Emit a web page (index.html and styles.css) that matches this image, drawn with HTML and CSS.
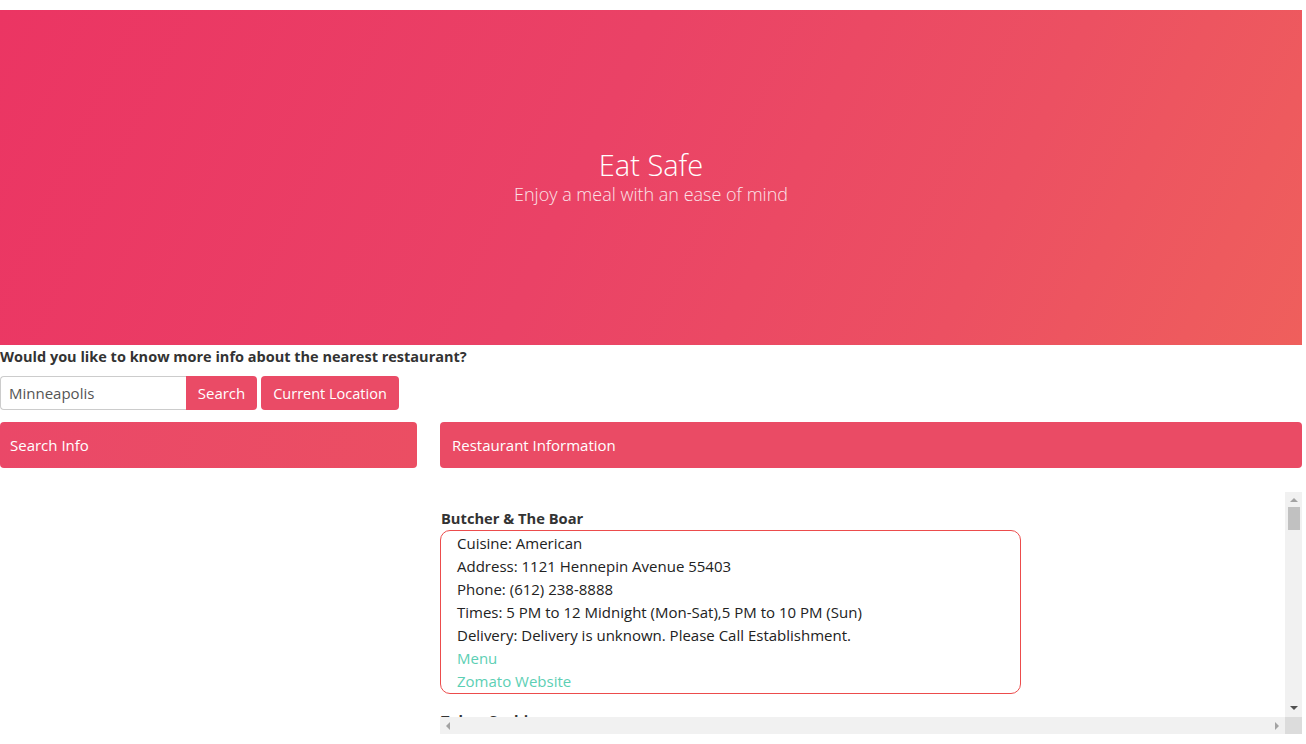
FILE: index.html
```html
<!DOCTYPE html>
<html lang="en">
<head>
<meta charset="utf-8">
<title>Eat Safe</title>
<link rel="stylesheet" href="styles.css">
</head>
<body>
<div class="page">
  <header class="hero">
    <h1 class="hero-title">Eat Safe</h1>
    <p class="hero-sub">Enjoy a meal with an ease of mind</p>
  </header>

  <p class="question">Would you like to know more info about the nearest restaurant?</p>

  <div class="search-row">
    <input class="search-input" type="text" value="Minneapolis">
    <button class="btn btn-search">Search</button>
    <button class="btn btn-location">Current Location</button>
  </div>

  <div class="columns">
    <section class="col-left">
      <div class="panel">Search Info</div>
    </section>
    <section class="col-right">
      <div class="panel">Restaurant Information</div>
      <div class="results">
        <div class="viewport">
          <div class="item">
            <h3 class="item-name">Butcher &amp; The Boar</h3>
            <div class="item-box">
              <p>Cuisine: American</p>
              <p>Address: 1121 Hennepin Avenue 55403</p>
              <p>Phone: (612) 238-8888</p>
              <p>Times: 5 PM to 12 Midnight (Mon-Sat),5 PM to 10 PM (Sun)</p>
              <p>Delivery: Delivery is unknown. Please Call Establishment.</p>
              <p><a href="#">Menu</a></p>
              <p><a href="#">Zomato Website</a></p>
            </div>
          </div>
          <div class="item">
            <h3 class="item-name">Tokyo Sushi</h3>
          </div>
        </div>
        <div class="vbar">
          <span class="arrow arrow-up"></span>
          <div class="vtrack"><span class="vthumb"></span></div>
          <span class="arrow arrow-down"></span>
        </div>
        <div class="hbar">
          <span class="arrow arrow-left"></span>
          <span class="arrow arrow-right"></span>
        </div>
        <div class="corner"></div>
      </div>
    </section>
  </div>
</div>
</body>
</html>
```

FILE: styles.css
```css
* { box-sizing: border-box; }

html, body {
  margin: 0;
  padding: 0;
  background: #fff;
  overflow: hidden;
}

body {
  font-family: "Open Sans", "Noto Sans", sans-serif;
  font-size: 14px;
  color: #333;
}

.page {
  width: 1302px;
  padding-top: 10px;
}

.hero {
  height: 335px;
  background: linear-gradient(115deg, #eb3563 0%, #ea4266 45%, #ec5062 75%, #ef5f5c 100%);
  display: flex;
  flex-direction: column;
  align-items: center;
  justify-content: center;
  color: #fff;
  text-align: center;
  padding-bottom: 2px;
}

.hero-title {
  margin: 0;
  font-weight: 300;
  font-size: 29px;
  line-height: 36px;
}

.hero-sub {
  margin: -1px 0 0;
  font-weight: 300;
  font-size: 18px;
  line-height: 24px;
  color: #fbe3e8;
}

.question {
  margin: 1px 0 0;
  font-weight: 700;
  font-size: 14.5px;
  line-height: 22px;
  color: #333;
}

.search-row {
  display: flex;
  margin-top: 8px;
  height: 34px;
}

.search-input {
  width: 186px;
  height: 34px;
  border: 1px solid #ccc;
  border-right: none;
  border-radius: 4px 0 0 4px;
  padding: 0 8px;
  font-family: inherit;
  font-size: 15px;
  color: #555;
  outline: none;
}

.btn {
  height: 34px;
  border: none;
  background: #ea4b66;
  color: #fff;
  font-family: inherit;
  font-size: 15px;
  padding: 0;
  white-space: nowrap;
  cursor: pointer;
}

.btn-search {
  width: 71px;
  border-radius: 0 4px 4px 0;
}

.btn-location {
  width: 138px;
  margin-left: 4px;
  border-radius: 4px;
  font-size: 14.5px;
}

.columns {
  display: flex;
  gap: 23px;
  margin-top: 12px;
}

.col-left {
  width: 417px;
  flex: none;
}

.col-right {
  flex: 1;
  min-width: 0;
}

.panel {
  height: 46px;
  background: #ea4b65;
  border-radius: 4px;
  color: #fff;
  font-size: 15px;
  display: flex;
  align-items: center;
  padding-left: 12px;
}

.col-left .panel {
  padding-left: 10px;
  background: linear-gradient(100deg, #ea4868, #eb4e63);
}

.results {
  margin-top: 24px;
  height: 242px;
  display: grid;
  grid-template-columns: 1fr 17px;
  grid-template-rows: 1fr 17px;
}

.viewport {
  overflow: hidden;
  padding-top: 16px;
}

.item {
  margin-bottom: 16px;
}

.item-name {
  margin: 0 0 2px 1px;
  font-size: 14.7px;
  font-weight: 700;
  line-height: 20px;
  color: #333;
}

.item-box {
  width: 581px;
  border: 1px solid #ec4c4c;
  border-radius: 10px;
  padding: 1px 0 0 16px;
}

.item-box p {
  margin: 0;
  font-size: 15px;
  line-height: 23px;
  color: #222;
  white-space: nowrap;
}

.item-box a {
  color: #5ccfb4;
  text-decoration: none;
}

/* drawn scrollbars */
.vbar {
  background: #f1f1f1;
  display: flex;
  flex-direction: column;
  align-items: center;
}

.vtrack {
  flex: 1;
  width: 100%;
  padding: 0 2px 0 3px;
}

.vthumb {
  display: block;
  height: 23px;
  background: #c1c1c1;
}

.hbar {
  background: #f1f1f1;
  display: flex;
  justify-content: space-between;
  align-items: center;
  padding: 0 6px;
}

.corner {
  background: #dcdcdc;
}

.arrow {
  display: block;
  width: 0;
  height: 0;
  border-style: solid;
  flex: none;
}

.arrow-up {
  margin: 6px 0 5px;
  border-width: 0 4px 4px 4px;
  border-color: transparent transparent #a3a3a3 transparent;
}

.arrow-down {
  margin: 5px 0 7px;
  border-width: 4px 4px 0 4px;
  border-color: #505050 transparent transparent transparent;
}

.arrow-left {
  border-width: 4px 4px 4px 0;
  border-color: transparent #a3a3a3 transparent transparent;
}

.arrow-right {
  border-width: 4px 0 4px 4px;
  border-color: transparent transparent transparent #a3a3a3;
}
```
